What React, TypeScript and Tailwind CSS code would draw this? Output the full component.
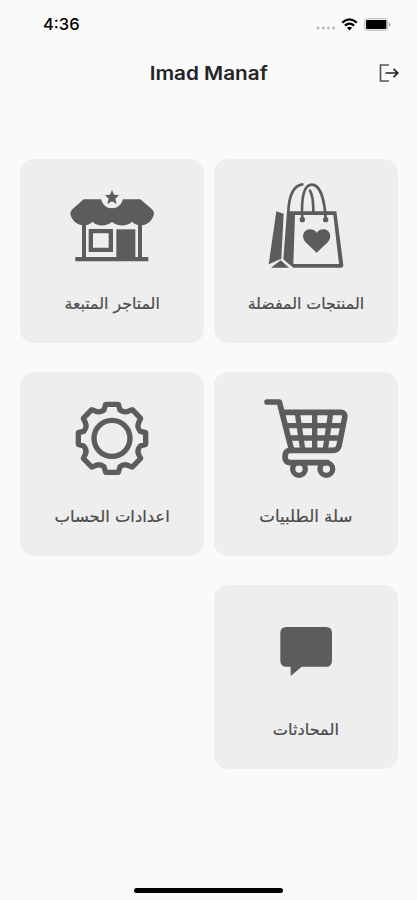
import React from 'react';

// Interface for a dashboard menu entry
interface MenuItem {
  id: string;
  label: string;
  icon: React.FC;
  labelClass: string;
}

const StoreIcon: React.FC = () => (
  <svg viewBox="168 87 276 276" className="h-[92px] w-[92px]" fill="currentColor" aria-hidden="true">
    <path d="M306 120l6 14 15 1-11 11 4 16-14-8-14 8 4-16-11-11 15-1z" />
    <path d="M221 148H273C279 166 290 175 306 175S333 166 339 148H391L426 178Q434 186 431 196C426 212 412 225 396 226Q376 226 366 215C352 230 322 230 306 216C290 230 260 230 248 215Q238 226 218 226C201 225 187 212 182 196Q179 186 187 178Z" />
    <path d="M216 220h12v101h156V220h12v101h19v13H196v-13h20z" />
    <path fillRule="evenodd" d="M236 237h73v69h-73zM249 250v43h47v-43z" />
    <path d="M319 238h57v84h-57z" />
  </svg>
);

const BagIcon: React.FC = () => (
  <svg viewBox="164 87 276 276" className="h-[92px] w-[92px]" fill="currentColor" aria-hidden="true">
    <path d="M213 184l22 7-7 135-38 17z" />
    <path d="M197 353l29-22 25 22z" />
    <path fillRule="evenodd" d="M245 184h148l21 161q0 8-8 8H264l-30-25zM269 195l-5 147h137l-17-147z" />
    <path d="M334 308l-34-32c-14-17-5-38 14-38 10 0 16 4 20 11 4-7 10-11 20-11 19 0 28 21 14 38z" />
    <g fill="none" stroke="currentColor" strokeWidth="8" strokeLinecap="round">
      <path d="M249 184c2-42 14-77 42-81" />
      <path d="M291 208c-4-62 4-104 28-104 26 0 39 46 42 104" />
      <path d="M314 122c8 12 10 36 10 62" />
    </g>
    <circle cx="291" cy="209" r="8" />
    <circle cx="361" cy="209" r="8" />
  </svg>
);

const GearIcon: React.FC = () => (
  <svg
    viewBox="168 81 276 276"
    className="h-[92px] w-[92px]"
    fill="none"
    stroke="currentColor"
    strokeWidth="16"
    strokeLinejoin="round"
    aria-hidden="true"
  >
    <circle cx="306" cy="220" r="54" />
    <path d="M287 118H325L330 135Q345 145 358 137L367 134L392 160L386 173Q380 187 391 199L407 203V238L391 243Q380 255 386 268L392 280L367 306L358 303Q345 295 330 305L325 322H287L282 305Q267 295 254 303L245 306L220 280L226 268Q232 255 221 243L205 238V203L221 199Q232 187 226 173L220 160L245 134L254 137Q267 145 282 135Z" />
  </svg>
);

const CartIcon: React.FC = () => (
  <svg
    viewBox="164 81 276 276"
    className="h-[92px] w-[92px]"
    fill="none"
    stroke="currentColor"
    strokeWidth="17"
    strokeLinecap="round"
    strokeLinejoin="round"
    aria-hidden="true"
  >
    <path d="M185 111H222L259 256" />
    <path d="M235 142H405Q421 142 418 158L401 243Q397 256 384 256H252Q239 259 239 275T254 293H366" />
    <path d="M244 182H410M250 219H403" strokeWidth="16" />
    <path d="M276 144L292 253M328 144V253M376 144L360 253" strokeWidth="16" />
    <circle cx="281" cy="312" r="19" strokeWidth="16" />
    <circle cx="363" cy="312" r="19" strokeWidth="16" />
  </svg>
);

const ChatIcon: React.FC = () => (
  <svg viewBox="164 74 276 276" className="h-[92px] w-[92px]" fill="currentColor" aria-hidden="true">
    <path d="M243 140H362Q380 140 380 158V241Q380 259 362 259H289L256 287V259H243Q225 259 225 241V158Q225 140 243 140Z" />
  </svg>
);

// Dashboard entries, laid out right to left
const MENU_ITEMS: MenuItem[] = [
  { id: 'favorites', label: 'المنتجات المفضلة', icon: BagIcon, labelClass: 'text-[15.8px]' },
  { id: 'stores', label: 'المتاجر المتبعة', icon: StoreIcon, labelClass: 'text-[15.8px]' },
  { id: 'cart', label: 'سلة الطلبيات', icon: CartIcon, labelClass: 'text-[16.6px]' },
  { id: 'settings', label: 'اعدادات الحساب', icon: GearIcon, labelClass: 'text-[16.4px]' },
  { id: 'chats', label: 'المحادثات', icon: ChatIcon, labelClass: 'text-[16.2px]' }
];

const StatusBar: React.FC = () => (
  <div className="flex h-12 items-center justify-between pl-[43px] pr-[26px] text-black">
    <span className="text-[16.5px] font-medium leading-none">4:36</span>
    <div className="flex items-center">
      <svg viewBox="0 0 20 4" className="mt-2 h-1 w-5" fill="#b5b5b5" aria-hidden="true">
        <circle cx="2" cy="2" r="1.4" />
        <circle cx="7.2" cy="2" r="1.4" />
        <circle cx="12.4" cy="2" r="1.4" />
        <circle cx="17.6" cy="2" r="1.4" />
      </svg>
      <svg viewBox="0 0 17 13" className="ml-[5px] h-[13px] w-[17px]" fill="none" stroke="currentColor" strokeWidth="2.2" aria-hidden="true">
        <path d="M1.2 4.6Q8.5-1.8 15.8 4.6" />
        <path d="M3.9 7.6Q8.5 3.6 13.1 7.6" />
        <path d="M8.5 12.4L5.9 9.7Q8.5 7.7 11.1 9.7Z" fill="currentColor" stroke="none" />
      </svg>
      <svg viewBox="0 0 27 13" className="ml-1.5 h-[13px] w-[27px]" aria-hidden="true">
        <rect x="0.7" y="0.7" width="23" height="11.6" rx="2.5" fill="none" stroke="#b5b5b5" />
        <path d="M25 4.2q3 2.3 0 4.6z" fill="#a3a3a3" />
        <rect x="2" y="2" width="20.4" height="9" rx="1" fill="black" />
      </svg>
    </div>
  </div>
);

const Header: React.FC = () => (
  <header className="grid h-[50px] grid-cols-[48px_1fr_48px] items-center">
    <h1 className="col-start-2 pt-px text-center text-[18.5px] font-semibold leading-none text-[#242424]">
      <span className="inline-block scale-x-[1.12]">Imad Manaf</span>
    </h1>
    <button type="button" aria-label="Logout" className="flex justify-center text-[#222]">
      <svg viewBox="0 0 20 18" className="mr-2 h-[18px] w-5" fill="none" stroke="currentColor" strokeWidth="1.7" aria-hidden="true">
        <path d="M10 1H1.5V17H10" stroke="#555" />
        <path d="M6.5 9H18.6M14.6 4.8L18.8 9L14.6 13.2" />
      </svg>
    </button>
  </header>
);

const MenuCard: React.FC<{ item: MenuItem }> = ({ item }) => (
  <button
    type="button"
    className="flex h-[184px] flex-col items-center rounded-[14px] bg-[#eeeeee] pt-5 text-[#5c5c5c]"
  >
    <item.icon />
    <span
      className={`mt-[21px] whitespace-nowrap font-['DejaVu_Sans',sans-serif] leading-6 text-[#4a4a4a] [-webkit-text-stroke:0.2px_#4a4a4a] ${item.labelClass}`}
    >
      {item.label}
    </span>
  </button>
);

const App: React.FC = () => (
  <div className="flex h-[900px] w-full flex-col bg-[#fafafa] font-['Inter',sans-serif]">
    <StatusBar />
    <Header />
    <main dir="rtl" className="mt-[61px] grid grid-cols-2 gap-x-[9.5px] gap-y-[29px] pl-5 pr-[19px]">
      {MENU_ITEMS.map(item => (
        <MenuCard key={item.id} item={item} />
      ))}
    </main>
    {/* Home indicator */}
    <div className="mx-auto mb-[7px] mt-auto h-[5px] w-[149px] rounded-full bg-black" />
  </div>
);

export default App;
